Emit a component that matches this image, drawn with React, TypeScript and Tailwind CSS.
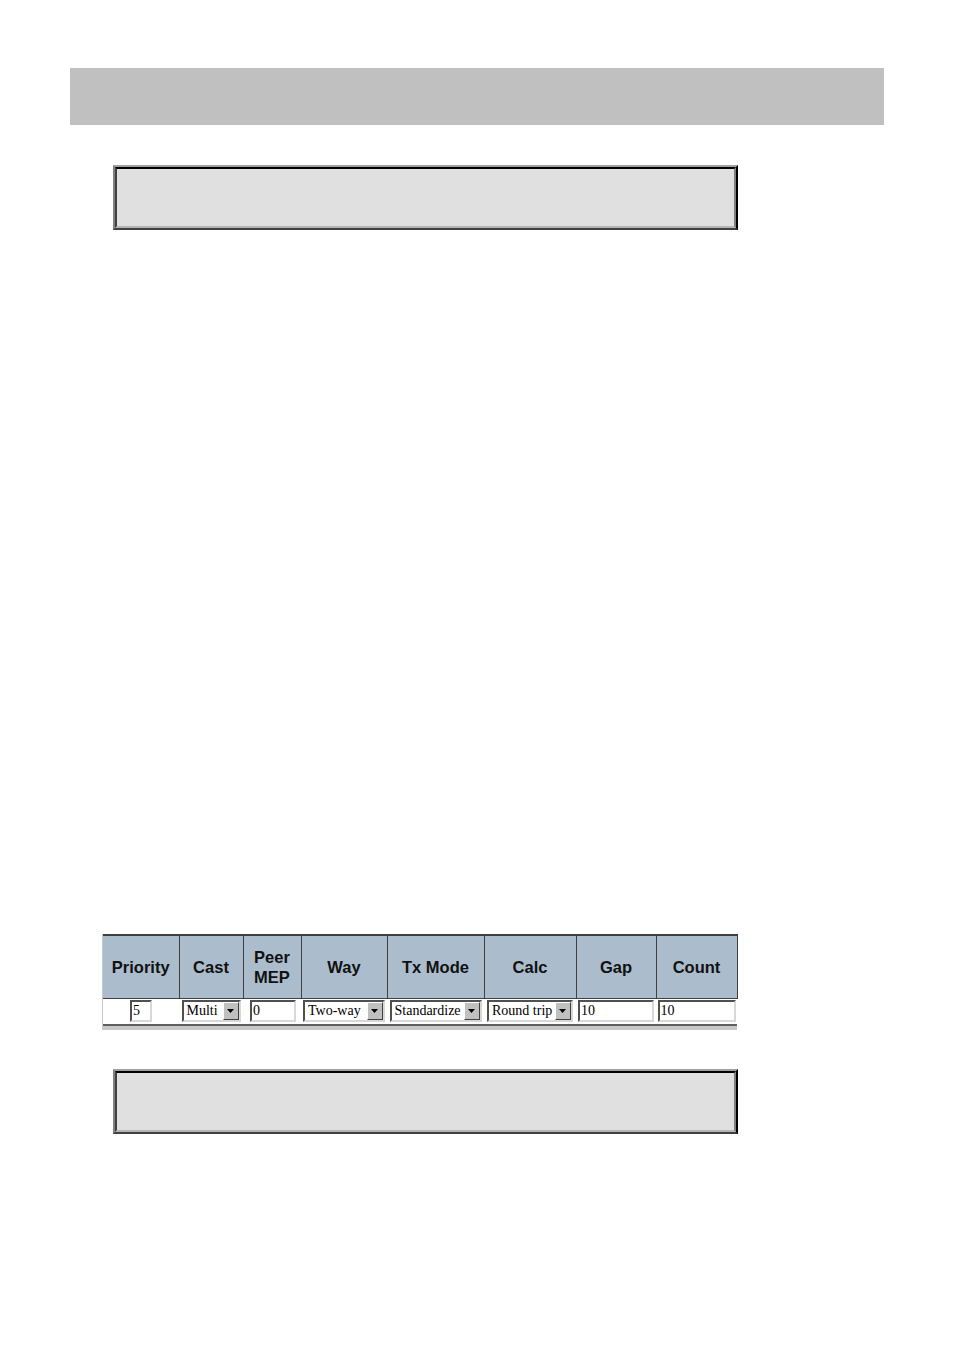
import React from 'react';

const serif = { fontFamily: '"Liberation Serif", "Times New Roman", serif' };
const sans = { fontFamily: '"Liberation Sans", Arial, sans-serif' };

function TextBox({ value, width }: { value: string; width: string }) {
  return (
    <div
      className={`${width} h-[22px] bg-white border-2 border-t-[#505050] border-l-[#505050] border-r-[#d8d8d8] border-b-[#d8d8d8] text-[14px] leading-[18px] pl-[1px] text-left text-black`}
      style={serif}
    >
      {value}
    </div>
  );
}

function Select({ value, width }: { value: string; width: string }) {
  return (
    <div
      className={`${width} h-[22px] bg-white border-2 border-t-[#505050] border-l-[#505050] border-r-[#d8d8d8] border-b-[#d8d8d8] flex items-stretch text-black`}
      style={serif}
    >
      <span className="flex-1 text-[14px] leading-[18px] pl-[3px] text-left whitespace-nowrap overflow-hidden">
        {value}
      </span>
      <span className="w-[16px] bg-[#c0c0c0] border border-t-white border-l-white border-r-[#404040] border-b-[#404040] flex items-center justify-center">
        <svg width="8" height="5" viewBox="0 0 8 5">
          <path d="M0 0 H7 L3.5 4 Z" fill="#000" />
        </svg>
      </span>
    </div>
  );
}

function Panel({ className }: { className: string }) {
  return (
    <div
      className={`${className} w-[625px] h-[65px] border-2 border-t-[#a0a0a0] border-l-[#808080] border-r-black border-b-[#404040]`}
    >
      <div className="w-full h-full bg-[#e0e0e0] border-2 border-t-black border-l-[#404040] border-r-[#808080] border-b-[#b4b4b4]" />
    </div>
  );
}

const columns = [
  { label: ['Priority'], w: 'w-[76px]' },
  { label: ['Cast'], w: 'w-[64px]' },
  { label: ['Peer', 'MEP'], w: 'w-[58px]' },
  { label: ['Way'], w: 'w-[86px]' },
  { label: ['Tx Mode'], w: 'w-[97px]' },
  { label: ['Calc'], w: 'w-[92px]' },
  { label: ['Gap'], w: 'w-[80px]' },
  { label: ['Count'], w: 'w-[81px]' },
];

export default function App() {
  return (
    <div className="w-[954px] min-h-[1350px] bg-white pt-[68px]">
      <div className="ml-[70px] w-[814px] h-[57px] bg-[#c0c0c0]" />

      <Panel className="ml-[113px] mt-[40px]" />

      <div className="ml-[102px] mt-[704px] w-[635px] border-l border-l-[#c8c8c8] border-b-4 border-b-[#c8c8c8]">
        <table className="w-[633px] border-collapse table-fixed" style={sans}>
          <thead>
            <tr className="h-[63px]">
              {columns.map((c, i) => (
                <th
                  key={i}
                  className={`${c.w} bg-[#abbdcc] border-t-2 border-t-[#404040] border-r border-r-[#404040] text-[16.5px] leading-[20px] font-bold text-[#111] text-center align-middle p-0`}
                >
                  {c.label.map((l) => (
                    <div key={l}>{l}</div>
                  ))}
                </th>
              ))}
            </tr>
          </thead>
          <tbody>
            <tr className="h-[27px] bg-white border-t border-t-[#404040] border-b-2 border-b-[#606060]">
              <td className="p-0 align-middle">
                <div className="flex justify-center">
                  <TextBox value="5" width="w-[22px]" />
                </div>
              </td>
              <td className="p-0 align-middle">
                <div className="flex justify-center">
                  <Select value="Multi" width="w-[59px]" />
                </div>
              </td>
              <td className="p-0 align-middle">
                <div className="flex justify-center pl-[2px]">
                  <TextBox value="0" width="w-[46px]" />
                </div>
              </td>
              <td className="p-0 align-middle">
                <div className="flex justify-center">
                  <Select value="Two-way" width="w-[82px]" />
                </div>
              </td>
              <td className="p-0 align-middle">
                <div className="flex justify-center">
                  <Select value="Standardize" width="w-[92px]" />
                </div>
              </td>
              <td className="p-0 align-middle">
                <div className="flex justify-center">
                  <Select value="Round trip" width="w-[86px]" />
                </div>
              </td>
              <td className="p-0 align-middle">
                <div className="flex justify-center">
                  <TextBox value="10" width="w-[76px]" />
                </div>
              </td>
              <td className="p-0 align-middle">
                <div className="flex justify-center">
                  <TextBox value="10" width="w-[78px]" />
                </div>
              </td>
            </tr>
          </tbody>
        </table>
      </div>

      <Panel className="ml-[113px] mt-[39px]" />
    </div>
  );
}
